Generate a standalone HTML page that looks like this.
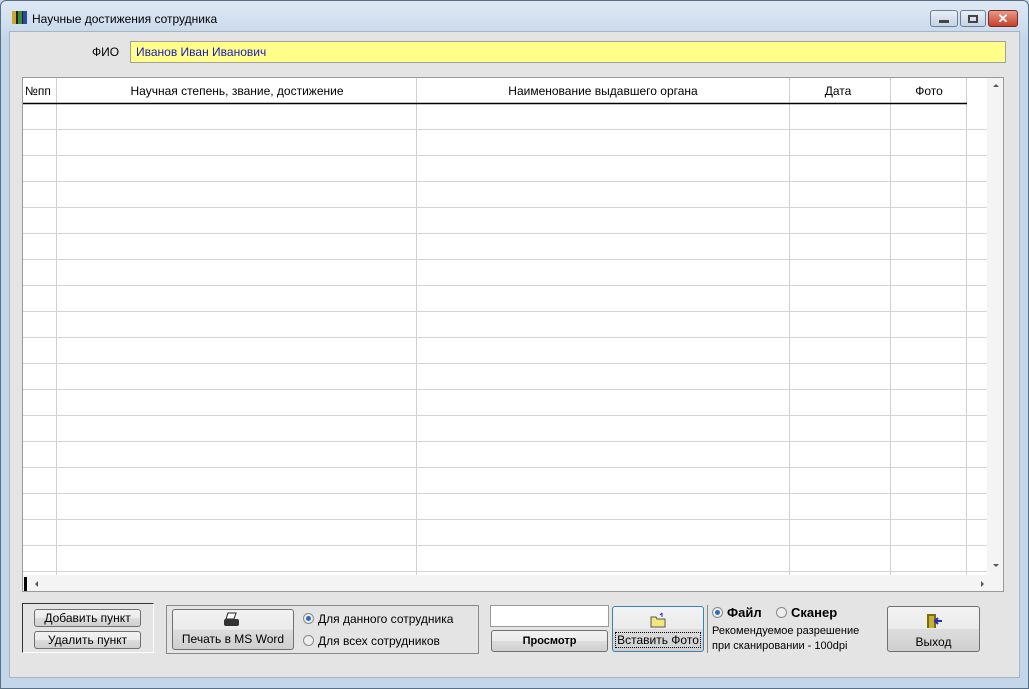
<!DOCTYPE html><html><head><meta charset="utf-8"><style>
*{box-sizing:border-box}body{margin:0;width:1029px;height:689px;background:#c9d9ea;font-family:"Liberation Sans",sans-serif;font-size:12px;position:relative;overflow:hidden}
.a{position:absolute}
.btn{position:absolute;border:1px solid #707070;border-radius:3px;background:linear-gradient(#f2f2f2 0,#ebebeb 50%,#dddddd 50%,#cfcfcf);text-align:center;color:#000}
.rad{display:inline-block;width:11px;height:11px;border-radius:50%;border:1px solid #8a8a8a;background:#eee;vertical-align:-1px;margin-right:4px;position:relative}
.rad.on::after{content:"";position:absolute;left:2px;top:2px;width:5px;height:5px;border-radius:50%;background:#2a6fb8}
</style></head><body>
<div class="a" style="left:0;top:0;width:1029px;height:689px;border:1px solid #5a6f85;border-radius:6px 6px 0 0;background:linear-gradient(#dfe9f5,#c4d6ea 40px)"></div>
<div class="a" style="left:12px;top:11px;width:15px;height:13px;background:linear-gradient(90deg,#c8a830 0 4px,#222 4px 6px,#3a8a3a 6px 10px,#222 10px 11px,#2a4aa0 11px)"></div>
<div class="a" style="left:32px;top:12px;font-size:12px">Научные достижения сотрудника</div>
<div class="a" style="left:930px;top:10px;width:28px;height:17px;border:1px solid #6a7f95;border-radius:3px;background:linear-gradient(#e8eef6,#c6d3e2)"><div class="a" style="left:8px;top:9px;width:10px;height:3px;background:#444"></div></div>
<div class="a" style="left:960px;top:10px;width:26px;height:17px;border:1px solid #6a7f95;border-radius:3px;background:linear-gradient(#e8eef6,#c6d3e2)"><div class="a" style="left:7px;top:4px;width:10px;height:8px;border:2px solid #444"></div></div>
<div class="a" style="left:988px;top:10px;width:30px;height:17px;border:1px solid #7a2a20;border-radius:3px;background:linear-gradient(#e89a88,#c7402b);color:#fff;font-weight:bold;text-align:center;line-height:15px;font-size:13px">✕</div>
<div class="a" style="left:9px;top:31px;width:1011px;height:647px;background:#e4e4e4;border:1px solid #a8b4c0"></div>
<div class="a" style="left:92px;top:45px;font-size:12px">ФИО</div>
<div class="a" style="left:130px;top:41px;width:876px;height:22px;background:#ffff8a;border:1px solid #a0a0a0;color:#1a1ac0;padding:3px 5px;font-size:12px">Иванов Иван Иванович</div>
<div class="a" style="left:22px;top:77px;width:982px;height:515px;background:#fff;border:1px solid #9a9a9a;overflow:hidden">
<svg class="a" style="left:0;top:0" width="982" height="515">
<g stroke="#d0d0d0">
<line x1="33.5" y1="0" x2="33.5" y2="497"/><line x1="393.5" y1="0" x2="393.5" y2="497"/><line x1="766.5" y1="0" x2="766.5" y2="497"/><line x1="867.5" y1="0" x2="867.5" y2="497"/><line x1="943.5" y1="0" x2="943.5" y2="497"/>
</g>
<g stroke="#d4d4d4">
<line x1="0" y1="51.5" x2="964" y2="51.5"/><line x1="0" y1="77.5" x2="964" y2="77.5"/><line x1="0" y1="103.5" x2="964" y2="103.5"/><line x1="0" y1="129.5" x2="964" y2="129.5"/><line x1="0" y1="155.5" x2="964" y2="155.5"/><line x1="0" y1="181.5" x2="964" y2="181.5"/><line x1="0" y1="207.5" x2="964" y2="207.5"/><line x1="0" y1="233.5" x2="964" y2="233.5"/><line x1="0" y1="259.5" x2="964" y2="259.5"/><line x1="0" y1="285.5" x2="964" y2="285.5"/><line x1="0" y1="311.5" x2="964" y2="311.5"/><line x1="0" y1="337.5" x2="964" y2="337.5"/><line x1="0" y1="363.5" x2="964" y2="363.5"/><line x1="0" y1="389.5" x2="964" y2="389.5"/><line x1="0" y1="415.5" x2="964" y2="415.5"/><line x1="0" y1="441.5" x2="964" y2="441.5"/><line x1="0" y1="467.5" x2="964" y2="467.5"/><line x1="0" y1="493.5" x2="964" y2="493.5"/>
</g>
<line x1="0" y1="25.5" x2="944" y2="25.5" stroke="#000" stroke-width="1.5"/>
<rect x="964" y="0" width="18" height="497" fill="#f4f4f4"/>
<rect x="0" y="497" width="982" height="18" fill="#f4f4f4"/>
<rect x="1" y="499" width="3" height="14" fill="#000"/>
<path d="M15 503l-3 3 3 3z M958 503l3 3-3 3z M970 9l3-3 3 3z M970 486l3 3 3-3z" fill="#555"/>
<g font-family="Liberation Sans" font-size="12" fill="#000">
<text x="2" y="17">№пп</text><text x="214" y="17" text-anchor="middle">Научная степень, звание, достижение</text><text x="580" y="17" text-anchor="middle">Наименование выдавшего органа</text><text x="815" y="17" text-anchor="middle">Дата</text><text x="906" y="17" text-anchor="middle">Фото</text></g>
</svg></div>
<div class="a" style="left:22px;top:603px;width:132px;height:50px;border-left:1px solid #333;border-top:1px solid #333;border-right:1px solid #fff;border-bottom:1px solid #fff"></div>
<div class="btn" style="left:34px;top:609px;width:107px;height:18px;line-height:16px">Добавить пункт</div>
<div class="btn" style="left:34px;top:631px;width:107px;height:18px;line-height:16px">Удалить пункт</div>
<div class="a" style="left:166px;top:605px;width:313px;height:49px;border:1px solid #888"></div>
<div class="btn" style="left:172px;top:609px;width:122px;height:41px;padding-top:22px">Печать в MS Word</div>
<svg class="a" style="left:222px;top:612px" width="20" height="16"><path d="M6 1h8l-2 6H4z" fill="#fff" stroke="#222"/><rect x="2" y="7" width="15" height="7" rx="2" fill="#333"/></svg>
<div class="a" style="left:303px;top:612px"><span class="rad on"></span>Для данного сотрудника</div>
<div class="a" style="left:303px;top:634px"><span class="rad"></span>Для всех сотрудников</div>
<div class="a" style="left:490px;top:605px;width:119px;height:22px;background:#fff;border:1px solid #999"></div>
<div class="btn" style="left:491px;top:630px;width:117px;height:22px;line-height:20px;font-weight:bold;font-size:11px">Просмотр</div>
<div class="btn" style="left:612px;top:606px;width:92px;height:46px;border-color:#3c7fb1;padding-top:26px;font-size:12px"><span style="border:1px dotted #000;padding:0 1px">Вставить Фото</span></div>
<svg class="a" style="left:648px;top:612px" width="20" height="16"><path d="M3 5h5l1 2h8v8H3z" fill="#f5e87a" stroke="#555"/><path d="M14 1v4M14 1l-2 2" stroke="#2030c0" fill="none"/></svg>
<div class="a" style="left:707px;top:605px;width:1px;height:48px;background:#888"></div>
<div class="a" style="left:712px;top:605px;font-weight:bold;font-size:13px"><span class="rad on"></span>Файл &nbsp;&nbsp; <span class="rad"></span>Сканер</div>
<div class="a" style="left:712px;top:624px;font-size:11px;line-height:15px">Рекомендуемое разрешение<br>при сканировании - 100dpi</div>
<div class="btn" style="left:887px;top:606px;width:93px;height:46px;padding-top:28px">Выход</div>
<svg class="a" style="left:925px;top:613px" width="18" height="16"><rect x="2" y="1" width="9" height="14" fill="#7a6a10"/><rect x="4" y="3" width="5" height="12" fill="#c8b030"/><path d="M11 8h6M13 5l-3 3 3 3" stroke="#2030c0" stroke-width="2" fill="none"/></svg>
</body></html>
